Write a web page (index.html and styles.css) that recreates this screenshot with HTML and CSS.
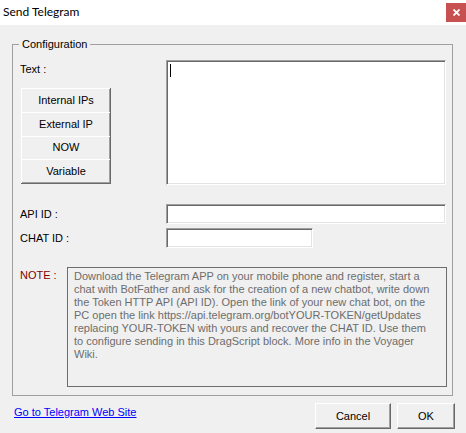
FILE: index.html
```html
<!DOCTYPE html>
<html>
<head>
<meta charset="utf-8">
<title>Send Telegram</title>
<link rel="stylesheet" href="styles.css">
</head>
<body>
<div class="titlebar">
  <div class="title">Send Telegram</div>
  <div class="close"><svg width="7" height="7" viewBox="0 0 7 7"><path d="M0.5 0.5L6.5 6.5M6.5 0.5L0.5 6.5" stroke="#fff" stroke-width="1.8"/></svg></div>
</div>
<fieldset class="group">
  <legend class="legend">Configuration</legend>
  <div class="cfg">
    <div class="row-top">
      <div class="left">
        <div class="label text-label">Text :</div>
        <div class="btns">
          <div class="btn">Internal IPs</div>
          <div class="btn">External IP</div>
          <div class="btn btn-short">NOW</div>
          <div class="btn">Variable</div>
        </div>
      </div>
      <div class="sunken textarea"><span class="caret"></span></div>
    </div>
    <div class="row row-api">
      <div class="label field-label">API ID :</div>
      <div class="sunken input input-wide"></div>
    </div>
    <div class="row row-chat">
      <div class="label field-label">CHAT ID :</div>
      <div class="sunken input input-narrow"></div>
    </div>
    <div class="row row-note">
      <div class="label note-label">NOTE :</div>
      <div class="note">Download the Telegram APP on your mobile phone and register, start a<br>chat with BotFather and ask for the creation of a new chatbot, write down<br>the Token HTTP API (API ID). Open the link of your new chat bot, on the<br>PC open the link https://api.telegram.org/botYOUR-TOKEN/getUpdates<br>replacing YOUR-TOKEN with yours and recover the CHAT ID. Use them<br>to configure sending in this DragScript block. More info in the Voyager<br>Wiki.</div>
    </div>
  </div>
</fieldset>
<div class="bottom">
  <a class="link" href="#">Go to Telegram Web Site</a>
  <div class="actions">
    <div class="pbtn pbtn-cancel">Cancel</div>
    <div class="pbtn pbtn-ok">OK</div>
  </div>
</div>
</body>
</html>
```
FILE: styles.css
```css
html, body {
  margin: 0;
  padding: 0;
}
body {
  width: 466px;
  height: 433px;
  overflow: hidden;
  background: #f0f0f0;
  font-family: "Liberation Sans", Arial, sans-serif;
  font-size: 11px;
  line-height: 13px;
  color: #000;
}
.titlebar {
  height: 25px;
  background: #fff;
  display: flex;
  justify-content: space-between;
  align-items: flex-start;
}
.title {
  font-family: Lato, "Liberation Sans", sans-serif;
  font-size: 12px;
  line-height: 16px;
  padding: 4px 0 0 3px;
}
.close {
  margin-top: 3px;
  width: 20px;
  height: 19px;
  background: #c75050;
  display: flex;
  align-items: center;
  justify-content: center;
}
.close svg {
  display: block;
  margin-left: 1px;
}
.group {
  margin: 13px 13px 0 12px;
  padding: 0 0 8px 0;
  border: 1px solid #a0a0a0;
  min-width: 0;
}
.legend {
  margin-left: 6px;
  padding: 0 3px;
  line-height: 13px;
}
.cfg {
  padding-left: 7px;
}
.row-top {
  display: flex;
  margin-top: 9px;
}
.left {
  width: 146px;
}
.text-label {
  margin-top: 3px;
}
.btns {
  margin-top: 12px;
  margin-left: 1px;
  width: 89px;
  display: flex;
  flex-direction: column;
  border-right: 1px solid #696969;
  border-bottom: 1px solid #696969;
  box-shadow: inset -1px -1px 0 #a0a0a0;
}
.btn {
  height: 24px;
  box-sizing: border-box;
  border-top: 1px solid #fff;
  border-left: 1px solid #fff;
  display: flex;
  align-items: center;
  justify-content: center;
  padding-bottom: 1px;
}
.btn-short {
  height: 23px;
}
.sunken {
  box-sizing: border-box;
  background: #fff;
  border: 1px solid;
  border-color: #a0a0a0 #fff #fff #a0a0a0;
  box-shadow: inset 1px 1px 0 #696969, inset -1px -1px 0 #e3e3e3;
}
.textarea {
  width: 280px;
  height: 125px;
  padding: 3px 0 0 3px;
}
.caret {
  display: block;
  width: 1px;
  height: 13px;
  background: #000;
}
.row {
  display: flex;
  align-items: center;
}
.field-label {
  width: 146px;
}
.row-api {
  margin-top: 19px;
}
.row-chat {
  margin-top: 4px;
}
.input {
  height: 20px;
}
.input-wide {
  width: 280px;
}
.input-narrow {
  width: 147px;
}
.row-note {
  margin-top: 19px;
  align-items: flex-start;
}
.note-label {
  width: 47px;
  margin-top: 2px;
  color: #800000;
}
.note {
  width: 380px;
  height: 120px;
  box-sizing: border-box;
  border: 1px solid #6d6d6d;
  padding: 2px 0 0 6px;
  color: #6d6d6d;
  white-space: nowrap;
}
.bottom {
  display: flex;
  justify-content: space-between;
  align-items: flex-start;
  padding: 0 11px 0 14px;
}
.link {
  margin-top: 10px;
  color: #0000ff;
  text-decoration: underline;
}
.actions {
  display: flex;
  gap: 6px;
  margin-top: 7px;
}
.pbtn {
  box-sizing: border-box;
  height: 26px;
  border: 1px solid;
  border-color: #fff #696969 #696969 #fff;
  box-shadow: inset -1px -1px 0 #a0a0a0;
  display: flex;
  align-items: center;
  justify-content: center;
}
.pbtn-cancel {
  width: 76px;
}
.pbtn-ok {
  width: 58px;
}
```
